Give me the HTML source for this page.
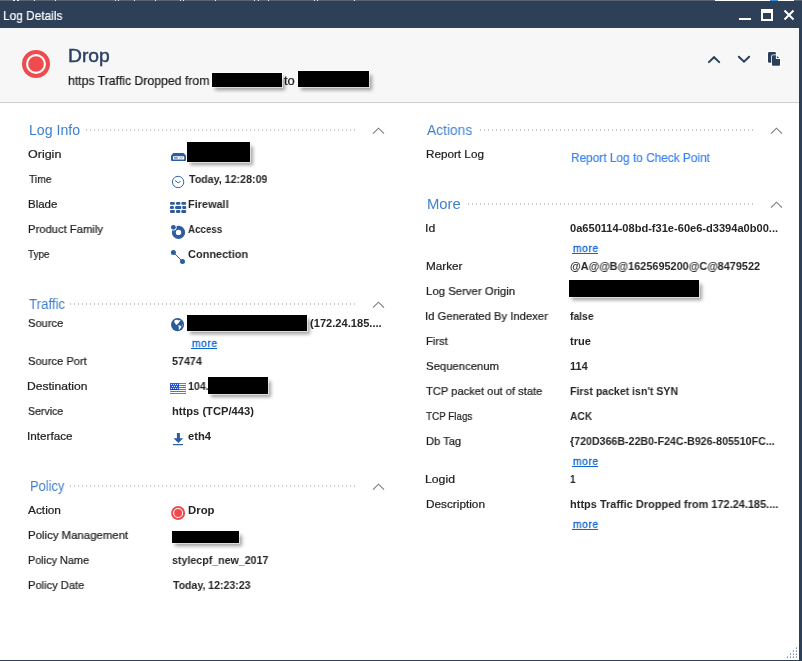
<!DOCTYPE html>
<html><head><meta charset="utf-8"><title>Log Details</title>
<style>
html,body{margin:0;padding:0;}
body{width:802px;height:661px;position:relative;overflow:hidden;background:#fff;font-family:"Liberation Sans",sans-serif;}
.t{position:absolute;white-space:nowrap;line-height:1;transform-origin:0 0;will-change:transform;}
.abs{position:absolute;}
.blk{position:absolute;background:#000;box-shadow:0 0 0 1px rgba(255,255,255,.6),3px 3.5px 3.5px 0 rgba(0,0,0,.36);}
.dots{position:absolute;height:2px;background-image:linear-gradient(90deg,#c9c9c9 1px,transparent 1px);background-size:4px 2px;}
svg{position:absolute;overflow:visible;}
</style></head><body>
<!-- top strip -->
<div class="abs" style="left:0;top:0;width:802px;height:1px;background:#5a6472;"></div>
<div class="abs" style="left:715px;top:0;width:79px;height:1px;background:#fff;"></div>
<div class="abs" style="left:770px;top:0;width:8px;height:1px;background:#3c8ee0;"></div>
<div class="abs" style="left:13px;top:0;width:1px;height:1px;background:#e9e9ee;"></div><div class="abs" style="left:14px;top:0;width:1px;height:1px;background:#e9e9ee;"></div><div class="abs" style="left:17px;top:0;width:1px;height:1px;background:#e9e9ee;"></div><div class="abs" style="left:18px;top:0;width:1px;height:1px;background:#e9e9ee;"></div><div class="abs" style="left:34px;top:0;width:1px;height:1px;background:#e9e9ee;"></div><div class="abs" style="left:55px;top:0;width:1px;height:1px;background:#e9e9ee;"></div><div class="abs" style="left:115px;top:0;width:1px;height:1px;background:#e9e9ee;"></div><div class="abs" style="left:118px;top:0;width:1px;height:1px;background:#e9e9ee;"></div><div class="abs" style="left:134px;top:0;width:1px;height:1px;background:#e9e9ee;"></div><div class="abs" style="left:155px;top:0;width:1px;height:1px;background:#e9e9ee;"></div><div class="abs" style="left:180px;top:0;width:1px;height:1px;background:#e9e9ee;"></div><div class="abs" style="left:183px;top:0;width:1px;height:1px;background:#e9e9ee;"></div><div class="abs" style="left:215px;top:0;width:1px;height:1px;background:#e9e9ee;"></div><div class="abs" style="left:254px;top:0;width:1px;height:1px;background:#e9e9ee;"></div><div class="abs" style="left:258px;top:0;width:1px;height:1px;background:#e9e9ee;"></div><div class="abs" style="left:268px;top:0;width:1px;height:1px;background:#e9e9ee;"></div><div class="abs" style="left:314px;top:0;width:1px;height:1px;background:#e9e9ee;"></div><div class="abs" style="left:317px;top:0;width:1px;height:1px;background:#e9e9ee;"></div><div class="abs" style="left:354px;top:0;width:1px;height:1px;background:#e9e9ee;"></div>
<!-- title bar -->
<div class="abs" style="left:0;top:1px;width:802px;height:27px;background:#2e4058;"></div>
<!-- header -->
<div class="abs" style="left:0;top:28px;width:799px;height:74px;background:#f7f7f8;"></div>
<div class="abs" style="left:0;top:102px;width:799px;height:1px;background:#cfcfcf;"></div>
<!-- right/bottom borders -->
<div class="abs" style="left:799px;top:1px;width:3px;height:660px;background:#2e4058;"></div>
<div class="abs" style="left:0;top:660px;width:802px;height:1px;background:#2e4058;"></div>

<!-- window buttons -->
<div class="abs" style="left:739px;top:18px;width:12px;height:2px;background:#fff;"></div>
<div class="abs" style="left:761px;top:9px;width:8px;height:6px;border:2px solid #fff;border-top-width:4px;"></div>
<svg style="left:783px;top:9px" width="12" height="12" viewBox="0 0 12 12"><path d="M1.5 1.5 L10.5 10.5 M10.5 1.5 L1.5 10.5" stroke="#fff" stroke-width="2" fill="none"/></svg>

<!-- header drop icon -->
<svg style="left:22px;top:50px" width="28" height="28" viewBox="0 0 28 28"><circle cx="14" cy="14" r="12" fill="none" stroke="#ef4b4f" stroke-width="4"/><circle cx="14" cy="14" r="7.8" fill="#ef4b4f"/></svg>
<!-- header nav icons -->
<svg style="left:706px;top:54px" width="16" height="12" viewBox="0 0 16 12"><path d="M2.9 8.1 L8.05 3.2 L13.2 8.1" stroke="#2b3f5c" stroke-width="2" fill="none" stroke-linecap="round" stroke-linejoin="miter"/></svg>
<svg style="left:736px;top:54px" width="16" height="12" viewBox="0 0 16 12"><path d="M2.85 2.8 L8 7.7 L13.15 2.8" stroke="#2b3f5c" stroke-width="2" fill="none" stroke-linecap="round" stroke-linejoin="miter"/></svg>
<svg style="left:762px;top:48px" width="24" height="22" viewBox="0 0 24 22">
<rect x="6" y="3.9" width="7.9" height="10.9" rx="1.3" fill="#2b3f5c" stroke="#fff" stroke-width="1.6" paint-order="stroke"/>
<path d="M11 7.2 H13.9 V11 H18 V16.8 Q18 17.8 17 17.8 H11 Q10 17.8 10 16.8 V8.2 Q10 7.2 11 7.2 Z" fill="#2b3f5c" stroke="#fff" stroke-width="1.6" paint-order="stroke"/>
<path d="M14.9 8 L17.2 10 H14.9 Z" fill="#2b3f5c" stroke="#fff" stroke-width="1.2" paint-order="stroke"/>
</svg>

<!-- header redactions -->
<div class="blk" style="left:212px;top:73px;width:70px;height:14px;"></div>
<div class="blk" style="left:298px;top:71px;width:71px;height:16px;"></div>

<!-- dotted lines + chevrons -->
<div class="dots" style="left:86px;top:129px;width:269px;"></div>
<div class="dots" style="left:70px;top:303px;width:285px;"></div>
<div class="dots" style="left:70px;top:485px;width:285px;"></div>
<div class="dots" style="left:480px;top:129px;width:273px;"></div>
<div class="dots" style="left:468px;top:203px;width:285px;"></div>
<svg style="left:372px;top:127px" width="13" height="8" viewBox="0 0 13 8"><path d="M1 6.7 L6.5 1.2 L12 6.7" stroke="#7c7c7c" stroke-width="1.1" fill="none"/></svg>
<svg style="left:372px;top:301px" width="13" height="8" viewBox="0 0 13 8"><path d="M1 6.7 L6.5 1.2 L12 6.7" stroke="#7c7c7c" stroke-width="1.1" fill="none"/></svg>
<svg style="left:372px;top:483px" width="13" height="8" viewBox="0 0 13 8"><path d="M1 6.7 L6.5 1.2 L12 6.7" stroke="#7c7c7c" stroke-width="1.1" fill="none"/></svg>
<svg style="left:770px;top:127px" width="13" height="8" viewBox="0 0 13 8"><path d="M1 6.7 L6.5 1.2 L12 6.7" stroke="#7c7c7c" stroke-width="1.1" fill="none"/></svg>
<svg style="left:770px;top:201px" width="13" height="8" viewBox="0 0 13 8"><path d="M1 6.7 L6.5 1.2 L12 6.7" stroke="#7c7c7c" stroke-width="1.1" fill="none"/></svg>

<!-- body redactions -->
<div class="blk" style="left:187px;top:142px;width:63px;height:19.5px;"></div>
<div class="blk" style="left:187px;top:315px;width:120px;height:15.5px;"></div>
<div class="blk" style="left:208px;top:377px;width:60px;height:16.8px;"></div>
<div class="blk" style="left:172px;top:531px;width:67px;height:12.3px;"></div>
<div class="blk" style="left:569px;top:280px;width:130px;height:16.5px;"></div>

<!-- ICONS left col -->
<!-- gateway -->
<svg style="left:171px;top:153px" width="15" height="8" viewBox="0 0 15 8"><path d="M2.4 0 H12.6 L15 2.4 V7 Q15 8 14 8 H1 Q0 8 0 7 V2.4 Z" fill="#2d5c9f"/><rect x="2" y="3.2" width="11.2" height="3.2" rx=".5" fill="#fff"/><rect x="3" y="4.4" width="3.8" height="1.1" fill="#2d5c9f"/><path d="M8.2 5.4 L9.2 4.5 L10.2 5.4 L11.3 4.3 L12.2 5" stroke="#2d5c9f" stroke-width=".6" fill="none"/></svg>
<!-- clock -->
<svg style="left:171px;top:175px" width="14" height="14" viewBox="0 0 14 14"><circle cx="7.1" cy="7" r="5.7" fill="none" stroke="#3a68aa" stroke-width="1"/><path d="M4 5.4 L7.1 7.9 L9.6 6.3" stroke="#3a68aa" stroke-width="1" fill="none"/></svg>
<!-- firewall -->
<svg style="left:170px;top:202px" width="17" height="12" viewBox="0 0 17 12"><g fill="#2d5c9f">
<rect x="0" y="0" width="4.9" height="2.8" rx="1"/><rect x="6" y="0" width="4.3" height="2.8" rx="1"/><rect x="11.3" y="0" width="4.9" height="2.8" rx="1"/>
<rect x="0" y="4" width="3.9" height="2.9" rx="1"/><rect x="5.1" y="4" width="6.2" height="2.9" rx="1"/><rect x="12.2" y="4" width="4" height="2.9" rx="1"/>
<rect x="0" y="8.1" width="4.9" height="3" rx="1"/><rect x="6" y="8.1" width="4.3" height="3" rx="1"/><rect x="11.3" y="8.1" width="4.9" height="3" rx="1"/></g></svg>
<!-- access -->
<svg style="left:170px;top:224px" width="17" height="16" viewBox="0 0 17 16"><circle cx="8.5" cy="8.4" r="4.65" fill="none" stroke="#2d5c9f" stroke-width="3.9"/><circle cx="3.4" cy="3.3" r="3.2" fill="#fff"/><circle cx="3.4" cy="3.3" r="2.4" fill="#2d5c9f"/></svg>
<!-- connection -->
<svg style="left:170px;top:249px" width="16" height="16" viewBox="0 0 16 16"><path d="M3.4 3.5 L12.5 12.4" stroke="#2d5c9f" stroke-width="1"/><circle cx="3.4" cy="3.5" r="2.5" fill="#2d5c9f"/><circle cx="12.5" cy="12.4" r="2.5" fill="#2d5c9f"/></svg>
<!-- globe -->
<svg style="left:170.9px;top:317.8px" width="13.1" height="13.2" viewBox="0 0 13 13"><circle cx="6.5" cy="6.5" r="6.5" fill="#2a5a9c"/><path d="M3.2 2.6 Q4.6 1.4 6.2 1.7 L7.4 2.4 L8.6 1.9 L9.6 2.8 L8.2 3.6 L7.6 5 L6 6.3 L5.2 6.8 L4.3 5.6 L3.4 4.2 Z" fill="#fff"/><path d="M7.2 7.2 L9 7.3 L10.6 8.6 L9.6 10 L8.2 11.6 L7.6 11.4 L7.8 9.4 Z" fill="#fff"/><circle cx="11.4" cy="6.8" r=".5" fill="#dfe8f3"/></svg>
<!-- flag -->
<svg style="left:170px;top:383px" width="16" height="11" viewBox="0 0 16 11" shape-rendering="crispEdges"><rect x="0" y="0" width="1" height="1" fill="#3f4fc8"/><rect x="1" y="0" width="8" height="1" fill="#4a4fc4"/><rect x="9" y="0" width="7" height="1" fill="#d2604a"/><rect x="0" y="1" width="1" height="1" fill="#3f4fc8"/><rect x="1" y="1" width="1" height="1" fill="#e8eefc"/><rect x="2" y="1" width="1" height="1" fill="#1f56e0"/><rect x="3" y="1" width="1" height="1" fill="#e8eefc"/><rect x="4" y="1" width="1" height="1" fill="#1f56e0"/><rect x="5" y="1" width="1" height="1" fill="#e8eefc"/><rect x="6" y="1" width="1" height="1" fill="#1f56e0"/><rect x="7" y="1" width="1" height="1" fill="#e8eefc"/><rect x="8" y="1" width="1" height="1" fill="#1f56e0"/><rect x="9" y="1" width="6" height="1" fill="#ffffff"/><rect x="15" y="1" width="1" height="1" fill="#e9d8d2"/><rect x="0" y="2" width="1" height="1" fill="#3f4fc8"/><rect x="1" y="2" width="8" height="1" fill="#1f56e0"/><rect x="9" y="2" width="6" height="1" fill="#f53b3b"/><rect x="15" y="2" width="1" height="1" fill="#c87a66"/><rect x="0" y="3" width="1" height="1" fill="#3f4fc8"/><rect x="1" y="3" width="1" height="1" fill="#1f56e0"/><rect x="2" y="3" width="1" height="1" fill="#e8eefc"/><rect x="3" y="3" width="1" height="1" fill="#1f56e0"/><rect x="4" y="3" width="1" height="1" fill="#e8eefc"/><rect x="5" y="3" width="1" height="1" fill="#1f56e0"/><rect x="6" y="3" width="1" height="1" fill="#e8eefc"/><rect x="7" y="3" width="2" height="1" fill="#1f56e0"/><rect x="9" y="3" width="4" height="1" fill="#ffffff"/><rect x="13" y="3" width="1" height="1" fill="#f2e24a"/><rect x="14" y="3" width="1" height="1" fill="#ffffff"/><rect x="15" y="3" width="1" height="1" fill="#e9d8d2"/><rect x="0" y="4" width="1" height="1" fill="#3f4fc8"/><rect x="1" y="4" width="8" height="1" fill="#1f56e0"/><rect x="9" y="4" width="6" height="1" fill="#f53b3b"/><rect x="15" y="4" width="1" height="1" fill="#c87a66"/><rect x="0" y="5" width="1" height="1" fill="#3f4fc8"/><rect x="1" y="5" width="1" height="1" fill="#e8eefc"/><rect x="2" y="5" width="1" height="1" fill="#1f56e0"/><rect x="3" y="5" width="1" height="1" fill="#e8eefc"/><rect x="4" y="5" width="1" height="1" fill="#1f56e0"/><rect x="5" y="5" width="1" height="1" fill="#e8eefc"/><rect x="6" y="5" width="1" height="1" fill="#1f56e0"/><rect x="7" y="5" width="1" height="1" fill="#e8eefc"/><rect x="8" y="5" width="1" height="1" fill="#1f56e0"/><rect x="9" y="5" width="6" height="1" fill="#ffffff"/><rect x="15" y="5" width="1" height="1" fill="#e9d8d2"/><rect x="0" y="6" width="9" height="1" fill="#123fb0"/><rect x="9" y="6" width="6" height="1" fill="#f53b3b"/><rect x="15" y="6" width="1" height="1" fill="#c87a66"/><rect x="0" y="7" width="1" height="1" fill="#f3e6e2"/><rect x="1" y="7" width="14" height="1" fill="#ffffff"/><rect x="15" y="7" width="1" height="1" fill="#e9d8d2"/><rect x="0" y="8" width="1" height="1" fill="#ee6a5a"/><rect x="1" y="8" width="14" height="1" fill="#f53b3b"/><rect x="15" y="8" width="1" height="1" fill="#c87a66"/><rect x="0" y="9" width="1" height="1" fill="#f3e6e2"/><rect x="1" y="9" width="14" height="1" fill="#ffffff"/><rect x="15" y="9" width="1" height="1" fill="#e9d8d2"/><rect x="0" y="10" width="16" height="1" fill="#d2604a"/></svg>
<!-- download -->
<svg style="left:172px;top:433px" width="12" height="13" viewBox="0 0 12 13"><path d="M4.9 0 H7.9 V5.2 H11.2 L6.4 10 L1.5 5.2 H4.9 Z" fill="#2d5c9f"/><rect x="1" y="11" width="10" height="1.2" fill="#2d5c9f"/></svg>
<!-- policy drop -->
<svg style="left:171px;top:506px" width="14" height="14" viewBox="0 0 14 14"><circle cx="7.1" cy="7" r="6" fill="none" stroke="#ef4b4f" stroke-width="2"/><circle cx="7.1" cy="7" r="4" fill="#ef4b4f"/></svg>

<!-- resize grip -->
<svg style="left:786px;top:646px" width="12" height="12" viewBox="0 0 12 12"><g fill="#8a98b4"><rect x="10" y="1.3" width="1" height="1.7"/><rect x="9.4" y="2.1" width=".6" height=".8" fill="#d5dae6"/><rect x="10" y="4.3" width="1" height="1.7"/><rect x="9.4" y="5.1" width=".6" height=".8" fill="#d5dae6"/><rect x="7" y="4.3" width="1" height="1.7"/><rect x="6.4" y="5.1" width=".6" height=".8" fill="#d5dae6"/><rect x="10" y="7.3" width="1" height="1.7"/><rect x="9.4" y="8.1" width=".6" height=".8" fill="#d5dae6"/><rect x="7" y="7.3" width="1" height="1.7"/><rect x="6.4" y="8.1" width=".6" height=".8" fill="#d5dae6"/><rect x="4" y="7.3" width="1" height="1.7"/><rect x="3.4" y="8.1" width=".6" height=".8" fill="#d5dae6"/><rect x="10" y="10.3" width="1" height="1.7"/><rect x="9.4" y="11.1" width=".6" height=".8" fill="#d5dae6"/><rect x="7" y="10.3" width="1" height="1.7"/><rect x="6.4" y="11.1" width=".6" height=".8" fill="#d5dae6"/><rect x="4" y="10.3" width="1" height="1.7"/><rect x="3.4" y="11.1" width=".6" height=".8" fill="#d5dae6"/><rect x="1" y="10.3" width="1" height="1.7"/><rect x="0.4" y="11.1" width=".6" height=".8" fill="#d5dae6"/></g></svg>

<!-- more underlines -->
<div class="abs" style="left:191px;top:348px;width:26px;height:1px;background:#0f66d2;"></div>
<div class="abs" style="left:572px;top:253px;width:26px;height:1px;background:#0f66d2;"></div>
<div class="abs" style="left:572px;top:466px;width:26px;height:1px;background:#0f66d2;"></div>
<div class="abs" style="left:572px;top:529px;width:26px;height:1px;background:#0f66d2;"></div>

<div class="t" style="left:2.58px;top:9px;font-size:13px;font-weight:400;color:#ffffff;transform:scaleX(0.9130);-webkit-text-stroke:0.2px #ffffff;">Log Details</div>
<div class="t" style="left:68.37px;top:48px;font-size:17.5px;font-weight:400;color:#2c4165;transform:scaleX(1.1000);-webkit-text-stroke:0.45px #2c4165;">Drop</div>
<div class="t" style="left:67.97px;top:74px;font-size:13px;font-weight:400;color:#1a1a1a;transform:scaleX(0.9422);-webkit-text-stroke:0.2px #1a1a1a;">https Traffic Dropped from</div>
<div class="t" style="left:284.49px;top:74px;font-size:13px;font-weight:400;color:#1a1a1a;transform:scaleX(0.9895);-webkit-text-stroke:0.2px #1a1a1a;">to</div>
<div class="t" style="left:28.90px;top:123px;font-size:14px;font-weight:400;color:#3f7fcf;transform:scaleX(1.0102);">Log Info</div>
<div class="t" style="left:28.78px;top:297px;font-size:14px;font-weight:400;color:#3f7fcf;transform:scaleX(0.9494);">Traffic</div>
<div class="t" style="left:29.52px;top:479px;font-size:14px;font-weight:400;color:#3f7fcf;transform:scaleX(0.9236);">Policy</div>
<div class="t" style="left:427.13px;top:123px;font-size:14px;font-weight:400;color:#3f7fcf;transform:scaleX(0.9851);">Actions</div>
<div class="t" style="left:426.66px;top:197px;font-size:14px;font-weight:400;color:#3f7fcf;transform:scaleX(1.0594);">More</div>
<div class="t" style="left:27.98px;top:149px;font-size:11.5px;font-weight:400;color:#1e1e1e;transform:scaleX(1.0865);-webkit-text-stroke:0.22px #1e1e1e;">Origin</div>
<div class="t" style="left:28.56px;top:174px;font-size:11.5px;font-weight:400;color:#1e1e1e;transform:scaleX(0.8958);-webkit-text-stroke:0.22px #1e1e1e;">Time</div>
<div class="t" style="left:27.82px;top:199px;font-size:11.5px;font-weight:400;color:#1e1e1e;transform:scaleX(0.9982);-webkit-text-stroke:0.22px #1e1e1e;">Blade</div>
<div class="t" style="left:27.82px;top:224px;font-size:11.5px;font-weight:400;color:#1e1e1e;transform:scaleX(0.9771);-webkit-text-stroke:0.22px #1e1e1e;">Product Family</div>
<div class="t" style="left:28.16px;top:249px;font-size:11.5px;font-weight:400;color:#1e1e1e;transform:scaleX(0.8599);-webkit-text-stroke:0.22px #1e1e1e;">Type</div>
<div class="t" style="left:27.78px;top:318px;font-size:11.5px;font-weight:400;color:#1e1e1e;transform:scaleX(0.9687);-webkit-text-stroke:0.22px #1e1e1e;">Source</div>
<div class="t" style="left:27.69px;top:356px;font-size:11.5px;font-weight:400;color:#1e1e1e;transform:scaleX(0.9678);-webkit-text-stroke:0.22px #1e1e1e;">Source Port</div>
<div class="t" style="left:27.45px;top:381px;font-size:11.5px;font-weight:400;color:#1e1e1e;transform:scaleX(1.0509);-webkit-text-stroke:0.22px #1e1e1e;">Destination</div>
<div class="t" style="left:27.82px;top:406px;font-size:11.5px;font-weight:400;color:#1e1e1e;transform:scaleX(0.9160);-webkit-text-stroke:0.22px #1e1e1e;">Service</div>
<div class="t" style="left:27.13px;top:431px;font-size:11.5px;font-weight:400;color:#1e1e1e;transform:scaleX(1.0175);-webkit-text-stroke:0.22px #1e1e1e;">Interface</div>
<div class="t" style="left:28.28px;top:505px;font-size:11.5px;font-weight:400;color:#1e1e1e;transform:scaleX(1.0316);-webkit-text-stroke:0.22px #1e1e1e;">Action</div>
<div class="t" style="left:27.82px;top:530px;font-size:11.5px;font-weight:400;color:#1e1e1e;transform:scaleX(0.9917);-webkit-text-stroke:0.22px #1e1e1e;">Policy Management</div>
<div class="t" style="left:27.82px;top:555px;font-size:11.5px;font-weight:400;color:#1e1e1e;transform:scaleX(0.9450);-webkit-text-stroke:0.22px #1e1e1e;">Policy Name</div>
<div class="t" style="left:27.82px;top:580px;font-size:11.5px;font-weight:400;color:#1e1e1e;transform:scaleX(0.9683);-webkit-text-stroke:0.22px #1e1e1e;">Policy Date</div>
<div class="t" style="left:425.71px;top:149px;font-size:11.5px;font-weight:400;color:#1e1e1e;transform:scaleX(1.0174);-webkit-text-stroke:0.22px #1e1e1e;">Report Log</div>
<div class="t" style="left:425.19px;top:223px;font-size:11.5px;font-weight:400;color:#1e1e1e;transform:scaleX(1.0616);-webkit-text-stroke:0.22px #1e1e1e;">Id</div>
<div class="t" style="left:425.70px;top:261px;font-size:11.5px;font-weight:400;color:#1e1e1e;transform:scaleX(1.0204);-webkit-text-stroke:0.22px #1e1e1e;">Marker</div>
<div class="t" style="left:425.80px;top:286px;font-size:11.5px;font-weight:400;color:#1e1e1e;transform:scaleX(0.9886);-webkit-text-stroke:0.22px #1e1e1e;">Log Server Origin</div>
<div class="t" style="left:425.18px;top:311px;font-size:11.5px;font-weight:400;color:#1e1e1e;transform:scaleX(0.9803);-webkit-text-stroke:0.22px #1e1e1e;">Id Generated By Indexer</div>
<div class="t" style="left:425.80px;top:336px;font-size:11.5px;font-weight:400;color:#1e1e1e;transform:scaleX(0.9686);-webkit-text-stroke:0.22px #1e1e1e;">First</div>
<div class="t" style="left:425.72px;top:361px;font-size:11.5px;font-weight:400;color:#1e1e1e;transform:scaleX(0.9846);-webkit-text-stroke:0.22px #1e1e1e;">Sequencenum</div>
<div class="t" style="left:426.30px;top:386px;font-size:11.5px;font-weight:400;color:#1e1e1e;transform:scaleX(0.9697);-webkit-text-stroke:0.22px #1e1e1e;">TCP packet out of state</div>
<div class="t" style="left:426.32px;top:411px;font-size:11.5px;font-weight:400;color:#1e1e1e;transform:scaleX(0.8578);-webkit-text-stroke:0.22px #1e1e1e;">TCP Flags</div>
<div class="t" style="left:425.81px;top:436px;font-size:11.5px;font-weight:400;color:#1e1e1e;transform:scaleX(0.9704);-webkit-text-stroke:0.22px #1e1e1e;">Db Tag</div>
<div class="t" style="left:425.31px;top:474px;font-size:11.5px;font-weight:400;color:#1e1e1e;transform:scaleX(1.0641);-webkit-text-stroke:0.22px #1e1e1e;">Logid</div>
<div class="t" style="left:425.63px;top:499px;font-size:11.5px;font-weight:400;color:#1e1e1e;transform:scaleX(1.0251);-webkit-text-stroke:0.22px #1e1e1e;">Description</div>
<div class="t" style="left:188.50px;top:174px;font-size:11px;font-weight:700;color:#262626;transform:scaleX(0.9685);">Today, 12:28:09</div>
<div class="t" style="left:187.99px;top:199px;font-size:11px;font-weight:700;color:#262626;transform:scaleX(0.9888);">Firewall</div>
<div class="t" style="left:188.24px;top:224px;font-size:11px;font-weight:700;color:#262626;transform:scaleX(0.8874);">Access</div>
<div class="t" style="left:188.40px;top:249px;font-size:11px;font-weight:700;color:#262626;transform:scaleX(0.9938);">Connection</div>
<div class="t" style="left:309.57px;top:318px;font-size:11px;font-weight:700;color:#262626;transform:scaleX(1.0100);">(172.24.185....</div>
<div class="t" style="left:171.75px;top:356px;font-size:11px;font-weight:700;color:#262626;transform:scaleX(0.9766);">57474</div>
<div class="t" style="left:187.67px;top:381px;font-size:11px;font-weight:700;color:#262626;transform:scaleX(0.9675);">104.</div>
<div class="t" style="left:171.85px;top:406px;font-size:11px;font-weight:700;color:#262626;transform:scaleX(1.0151);">https (TCP/443)</div>
<div class="t" style="left:187.91px;top:431px;font-size:11px;font-weight:700;color:#262626;transform:scaleX(1.0227);">eth4</div>
<div class="t" style="left:187.92px;top:505px;font-size:11px;font-weight:700;color:#262626;transform:scaleX(1.0336);">Drop</div>
<div class="t" style="left:171.65px;top:555px;font-size:11px;font-weight:700;color:#262626;transform:scaleX(0.9670);">stylecpf_new_2017</div>
<div class="t" style="left:172.50px;top:580px;font-size:11px;font-weight:700;color:#262626;transform:scaleX(0.9571);">Today, 12:23:23</div>
<div class="t" style="left:570.12px;top:223px;font-size:11px;font-weight:700;color:#262626;transform:scaleX(1.0066);">0a650114-08bd-f31e-60e6-d3394a0b00...</div>
<div class="t" style="left:569.78px;top:261px;font-size:11px;font-weight:700;color:#262626;transform:scaleX(0.9891);">@A@@B@1625695200@C@8479522</div>
<div class="t" style="left:570.20px;top:311px;font-size:11px;font-weight:700;color:#262626;transform:scaleX(0.9417);">false</div>
<div class="t" style="left:570.44px;top:336px;font-size:11px;font-weight:700;color:#262626;transform:scaleX(1.0111);">true</div>
<div class="t" style="left:569.63px;top:361px;font-size:11px;font-weight:700;color:#262626;transform:scaleX(0.9893);">114</div>
<div class="t" style="left:569.99px;top:386px;font-size:11px;font-weight:700;color:#262626;transform:scaleX(0.9591);">First packet isn&#39;t SYN</div>
<div class="t" style="left:570.15px;top:411px;font-size:11px;font-weight:700;color:#262626;transform:scaleX(0.9263);">ACK</div>
<div class="t" style="left:570.28px;top:436px;font-size:11px;font-weight:700;color:#262626;transform:scaleX(0.9673);">{720D366B-22B0-F24C-B926-805510FC...</div>
<div class="t" style="left:569.63px;top:474px;font-size:11px;font-weight:700;color:#262626;transform:scaleX(0.9000);">1</div>
<div class="t" style="left:569.83px;top:499px;font-size:11px;font-weight:700;color:#262626;transform:scaleX(0.9966);">https Traffic Dropped from 172.24.185....</div>
<div class="t" style="left:570.92px;top:151px;font-size:13px;font-weight:400;color:#3b83f2;transform:scaleX(0.9113);-webkit-text-stroke:0.2px #3b83f2;">Report Log to Check Point</div>
<div class="t" style="left:191.64px;top:338px;font-size:11px;font-weight:400;color:#0f66d2;transform:scaleX(0.9350);letter-spacing:0.6px;-webkit-text-stroke:0.3px #0f66d2;">more</div>
<div class="t" style="left:572.64px;top:243px;font-size:11px;font-weight:400;color:#0f66d2;transform:scaleX(0.9350);letter-spacing:0.6px;-webkit-text-stroke:0.3px #0f66d2;">more</div>
<div class="t" style="left:572.64px;top:456px;font-size:11px;font-weight:400;color:#0f66d2;transform:scaleX(0.9350);letter-spacing:0.6px;-webkit-text-stroke:0.3px #0f66d2;">more</div>
<div class="t" style="left:572.64px;top:519px;font-size:11px;font-weight:400;color:#0f66d2;transform:scaleX(0.9350);letter-spacing:0.6px;-webkit-text-stroke:0.3px #0f66d2;">more</div>
</body></html>
